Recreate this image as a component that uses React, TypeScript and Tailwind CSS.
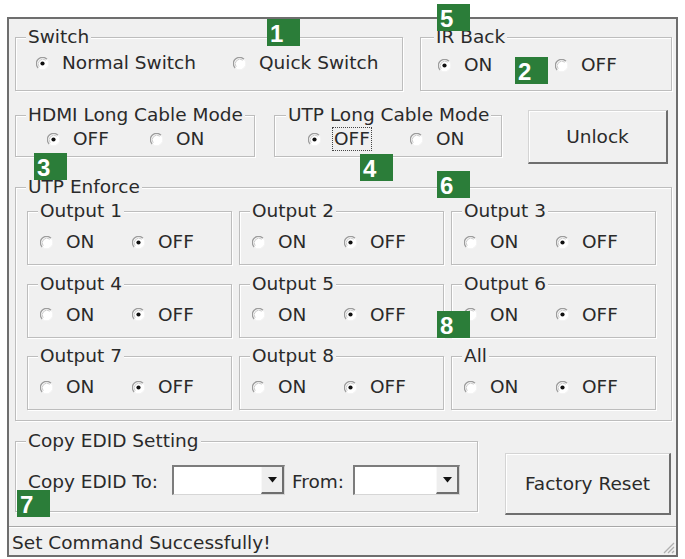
import React from "react";

function RadioIcon({ checked }: { checked?: boolean }) {
  return (
    <svg width="13" height="13" viewBox="0 0 13 13" className="shrink-0">
      <circle cx="6.5" cy="6.5" r="6" fill="#ffffff" />
      <path d="M11 2.2 A6 6 0 0 0 2.2 11" stroke="#9c9c9c" strokeWidth="1.3" fill="none" />
      <path d="M9.8 3.2 A4.7 4.7 0 0 0 3.2 9.8" stroke="#cacaca" strokeWidth="1" fill="none" />
      <path d="M2.2 11 A6 6 0 0 0 11 2.2" stroke="#f4f4f4" strokeWidth="1" fill="none" />
      {checked && <circle cx="6.5" cy="6.5" r="2.1" fill="#111111" />}
    </svg>
  );
}

function RadioItem({
  checked,
  label,
  className = "",
  focus,
}: {
  checked?: boolean;
  label: string;
  className?: string;
  focus?: boolean;
}) {
  return (
    <div className={`flex items-center h-[20px] gap-[13px] ${className}`}>
      <RadioIcon checked={checked} />
      <span
        className={
          focus
            ? "outline-1 outline-dotted outline-[#444444] outline-offset-[1px] whitespace-nowrap"
            : "whitespace-nowrap"
        }
      >
        {label}
      </span>
    </div>
  );
}

function Group({
  title,
  className = "",
  titleClass = "",
  children,
}: {
  title: string;
  className?: string;
  titleClass?: string;
  children?: React.ReactNode;
}) {
  return (
    <div
      className={`shrink-0 border border-[#bdbdbd] shadow-[inset_1px_1px_0_#ffffff,1px_1px_0_#ffffff] ${className}`}
    >
      <div className={`-mt-[11px] w-fit px-[2px] bg-[#f0f0f0] leading-[20px] whitespace-nowrap ${titleClass}`}>
        {title}
      </div>
      {children}
    </div>
  );
}

function Combo({ className = "" }: { className?: string }) {
  return (
    <div
      className={`flex h-[30px] bg-white border-t-2 border-l-2 border-t-[#7c7c7c] border-l-[#7c7c7c] border-r border-b border-r-[#d6d6d6] border-b-[#d6d6d6] ${className}`}
    >
      <div className="flex-1" />
      <div className="w-[23px] flex items-center justify-center bg-[#eeeeee] border-r-2 border-b-2 border-r-[#6e6e6e] border-b-[#6e6e6e] border-l border-l-[#f8f8f8]">
        <svg width="9" height="6" viewBox="0 0 9 6">
          <path d="M0 0 H9 L4.5 5.5 Z" fill="#111111" />
        </svg>
      </div>
    </div>
  );
}

function WinButton({ label, className = "" }: { label: string; className?: string }) {
  return (
    <button
      className={`shrink-0 flex items-center justify-center bg-[#f0f0f0] border-t border-l border-t-[#d4d4d4] border-l-[#d4d4d4] border-r-2 border-b-2 border-r-[#6e6e6e] border-b-[#6e6e6e] shadow-[inset_1px_1px_0_#ffffff] text-[#2a2a2a] ${className}`}
    >
      {label}
    </button>
  );
}

function Badge({ n, className }: { n: string; className: string }) {
  return (
    <div
      className={`absolute w-[33px] h-[27px] bg-[#2b7d39] text-white font-['Liberation_Sans',Arial,sans-serif] font-bold text-[24px] leading-[30px] pl-[3px] ${className}`}
    >
      {n}
    </div>
  );
}

function OutputBox({ title }: { title: string }) {
  return (
    <Group title={title} className="h-[54px]" titleClass="ml-[10px]">
      <div className="flex mt-[11px] ml-[12px]">
        <RadioItem label="ON" className="w-[92px]" />
        <RadioItem label="OFF" checked />
      </div>
    </Group>
  );
}

export default function App() {
  const outputs = ["Output 1", "Output 2", "Output 3", "Output 4", "Output 5", "Output 6", "Output 7", "Output 8", "All"];
  return (
    <div className="relative w-[685px] h-[559px] bg-white pt-[17px] pl-[7px] font-['DejaVu_Sans',Verdana,sans-serif] text-[18.5px] leading-[20px] text-[#2a2a2a] overflow-hidden">
      <div className="flex flex-col w-[671px] h-[540px] border-2 border-[#6e6e6e] bg-[#f0f0f0]">
        {/* Row 1 */}
        <div className="flex mt-[18px] ml-[6px]">
          <Group title="Switch" className="w-[388px] h-[54px]" titleClass="ml-[10px]">
            <div className="flex mt-[6px] ml-[20px]">
              <RadioItem checked label="Normal Switch" className="w-[197px]" />
              <RadioItem label="Quick Switch" />
            </div>
          </Group>
          <Group title="IR Back" className="ml-[17px] w-[252px] h-[54px]" titleClass="ml-[13px]">
            <div className="flex mt-[8px] ml-[17px]">
              <RadioItem checked label="ON" className="w-[117px]" />
              <RadioItem label="OFF" />
            </div>
          </Group>
        </div>

        {/* Row 2 */}
        <div className="flex items-start mt-[19px] ml-[6px]">
          <Group title="HDMI Long Cable Mode" className="mt-[5px] w-[240px] h-[42px]" titleClass="ml-[10px]">
            <div className="flex mt-[4px] ml-[31px]">
              <RadioItem checked label="OFF" className="w-[103px]" />
              <RadioItem label="ON" />
            </div>
          </Group>
          <Group title="UTP Long Cable Mode" className="mt-[5px] ml-[19px] w-[228px] h-[42px]" titleClass="ml-[11px]">
            <div className="flex mt-[4px] ml-[33px]">
              <RadioItem checked focus label="OFF" className="w-[102px]" />
              <RadioItem label="ON" />
            </div>
          </Group>
          <WinButton label="Unlock" className="ml-[26px] w-[140px] h-[54px]" />
        </div>

        {/* UTP Enforce */}
        <Group title="UTP Enforce" className="mt-[23px] ml-[6px] w-[657px] h-[234px]" titleClass="ml-[10px]">
          <div className="grid grid-cols-[205px_205px_205px] gap-x-[7px] gap-y-[18.5px] mt-[14px] ml-[11px]">
            {outputs.map((o) => (
              <OutputBox key={o} title={o} />
            ))}
          </div>
        </Group>

        {/* Row 4 */}
        <div className="flex items-start mt-[20px] ml-[6px]">
          <Group title="Copy EDID Setting" className="w-[463px] h-[71px]" titleClass="ml-[10px]">
            <div className="flex items-center mt-[14px] ml-[12px]">
              <span className="w-[144px] whitespace-nowrap pt-[3px]">Copy EDID To:</span>
              <Combo className="w-[113px]" />
              <span className="ml-[7px] w-[61px] whitespace-nowrap pt-[3px]">From:</span>
              <Combo className="w-[107px]" />
            </div>
          </Group>
          <WinButton label="Factory Reset" className="ml-[27px] mt-[12px] w-[166px] h-[62px]" />
        </div>

        {/* Status bar */}
        <div className="mt-[11px] flex-1 flex justify-between border-t border-[#a8a8a8] shadow-[inset_0_1px_0_#ffffff]">
          <div className="pl-[3px] pt-[3px] flex items-center">Set Command Successfully!</div>
          <div className="flex items-end pr-[1px] pb-[1px]">
            <svg width="14" height="14" viewBox="0 0 14 14">
              <path d="M13 3 L3 13 M13 7 L7 13 M13 11 L11 13" stroke="#b0b0b0" strokeWidth="1.3" />
            </svg>
          </div>
        </div>
      </div>

      <Badge n="1" className="left-[267px] top-[19px]" />
      <Badge n="5" className="left-[437px] top-[4px]" />
      <Badge n="2" className="left-[515px] top-[57px]" />
      <Badge n="3" className="left-[34px] top-[153px]" />
      <Badge n="4" className="left-[360px] top-[154px]" />
      <Badge n="6" className="left-[437px] top-[171px]" />
      <Badge n="8" className="left-[437px] top-[311px]" />
      <Badge n="7" className="left-[17px] top-[490px]" />
    </div>
  );
}
